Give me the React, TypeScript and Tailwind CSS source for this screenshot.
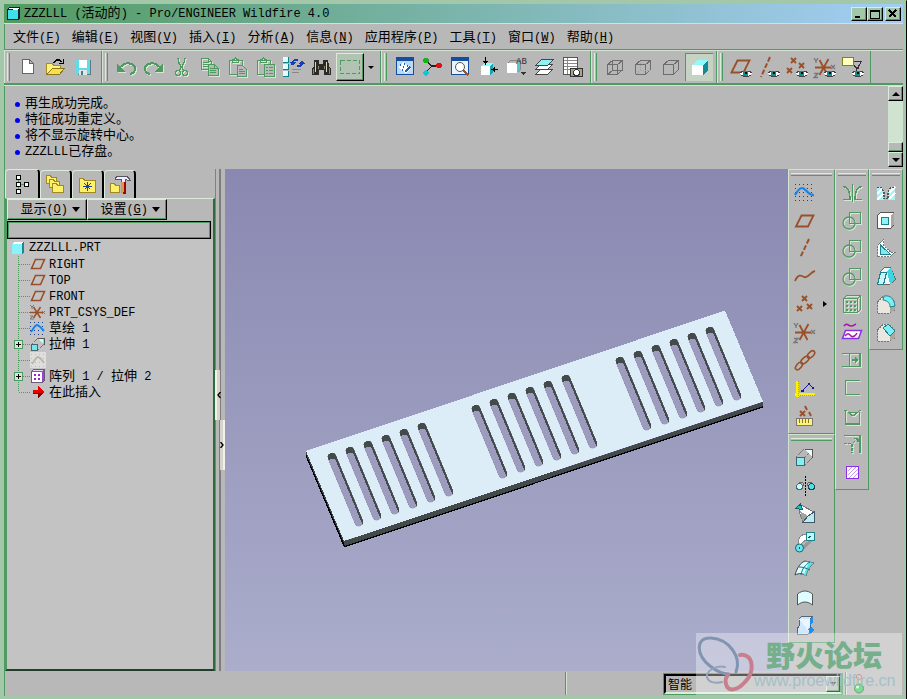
import React from "react";

type Tool = { name: string; icon: React.ReactNode; etched?: boolean; pressed?: boolean };

const green = "#4f9a61";
const brown = "#99502a";

const Icon: React.FC<{ children: React.ReactNode; etched?: boolean }> = ({ children, etched }) => (
    <svg
        viewBox="0 0 28 28"
        fill="none"
        shapeRendering="crispEdges"
        className={etched ? "h-7 w-7 drop-shadow-[1px_1px_0_#d5e6d5]" : "h-7 w-7"}
    >
        {children}
    </svg>
);

const Eye: React.FC = () => (
    <g>
        <path d="M13 20.500l3-2.500h6l3 2.500-3 2.500h-6z" fill="#fff" />
        <path d="M13 20l3-2h6l3 2M14 22l2 1h6l2-1" stroke="#444" />
        <rect x="16" y="18" width="5" height="5" fill="#0a8f8f" />
        <rect x="18" y="19" width="2" height="2" fill="#000" />
    </g>
);

const Csys: React.FC = () => (
    <g>
        <path d="M4 14.500h16M8.500 7l8 15M17.500 6l-9 16" stroke={brown} strokeWidth="1.800" shapeRendering="auto" />
        <path d="M3 5l2 3 2-3M5 8v2M3 20.500h4l-4 4h4M20 12l4 4M24 12l-4 4" stroke="#777" strokeWidth="1.300" shapeRendering="auto" />
    </g>
);

const Crosses: React.FC = () => (
    <path
        d="M11 6l5 5M16 6l-5 5M6 16l5 5M11 16l-5 5M16 14l5 5M21 14l-5 5"
        stroke={brown}
        strokeWidth="1.900"
        shapeRendering="auto"
    />
);

const Sketch: React.FC = () => (
    <g>
        {[6, 10, 14, 18, 22].map((y) => (
            <path key={y} d={`M4 ${y}.5h19`} stroke="#1b3f8f" strokeDasharray="1 3" />
        ))}
        <path d="M4 17c2-3 4-7 7-7 4 0 6 8 12 7" stroke="#1684f0" strokeWidth="2.200" shapeRendering="auto" />
    </g>
);

const Box: React.FC<{ variant: "wire" | "hidden" | "solid" }> = ({ variant }) => (
    <g stroke="#6d6d6d" strokeWidth="1.200">
        <path d="M6.500 11.500h10v10h-10zM6.500 11.500l5-4h10v9l-5 5M16.500 11.500l5-4" />
        {variant === "wire" && <path d="M11.500 7.500v10h10M11.500 17.500l-5 4" />}
        {variant === "hidden" && <path d="M11.500 7.500v10h10M11.500 17.500l-5 4" stroke="#a2a2a2" strokeDasharray="1 1" />}
    </g>
);

const CircleSquare: React.FC = () => (
    <g stroke={green} strokeWidth="1.300">
        <path d="M11.500 6.500h11v11h-11z" />
        <circle cx="11" cy="17" r="6" shapeRendering="auto" />
    </g>
);

const Block: React.FC<{ children: React.ReactNode }> = ({ children }) => (
    <g>
        <path d="M5.500 12l6-6h5l6 6v8l-5 3h-12z" fill="#e9e7df" stroke="#777" strokeDasharray="2 1" />
        <path d="M17.500 15l5-3v8l-5 3z" fill="#a9a79f" />
        {children}
    </g>
);

const fileTools: Tool[] = [
    { name: "新建", icon: <path d="M8.500 6.500h7l4 4v10h-11zM15.500 6.500v4h4" fill="#fff" stroke="#666" /> },
    {
        name: "打开",
        icon: (
            <g>
                <path d="M4.500 21.500v-11h6l1 2h7v3" fill="#fff27a" stroke="#a58d20" />
                <path d="M4.500 21.500l6-6h12l-5 6z" fill="#f8e04a" stroke="#8c7718" />
                <path d="M12 10c1-4 6-4 8-1M21.500 6v5M21 10.500h-4" stroke="#000" strokeWidth="1.400" />
            </g>
        ),
    },
    {
        name: "保存",
        icon: (
            <g>
                <path d="M6 7h14v15H8l-2-2z" fill="#62dbe8" />
                <path d="M20.500 7v14.500H8" stroke="#5c7c85" />
                <path d="M9 7h8v8H9z" fill="#fff" />
                <path d="M9 17h8v5H9z" fill="#e5e5e5" />
                <path d="M11 18h2v4h-2z" fill="#3b7f91" />
            </g>
        ),
    },
];

const editTools: Tool[] = [
    {
        name: "撤消",
        etched: true,
        icon: (
            <g>
                <path d="M9 14c4-6 14-4 14 2 0 2-1 4-5 5" stroke={green} strokeWidth="2" />
                <path d="M5 11v8h9z" fill={green} />
            </g>
        ),
    },
    {
        name: "重做",
        etched: true,
        icon: (
            <g>
                <path d="M19 14c-4-6-14-4-14 2 0 2 1 4 5 5" stroke={green} strokeWidth="2" />
                <path d="M23 11v8h-9z" fill={green} />
            </g>
        ),
    },
    {
        name: "剪切",
        etched: true,
        icon: (
            <g stroke={green} strokeWidth="1.400">
                <path d="M10 5l1 5 5 8M17 5l-1 5-5 8" />
                <circle cx="10" cy="20" r="2.500" />
                <circle cx="17" cy="20" r="2.500" />
            </g>
        ),
    },
    {
        name: "复制",
        etched: true,
        icon: (
            <g stroke={green} strokeWidth="1.200">
                <path d="M5.500 5.500h7l3 3v8h-10zM7 9.500h6M7 11.500h6M7 13.500h6M12.500 5.500v3h3" />
                <path d="M12.500 11.500h6l4 4v7h-10z" fill="#b8b8b8" />
                <path d="M14 15.500h4M14 17.500h6M14 19.500h6M18.500 11.500v4h4" />
            </g>
        ),
    },
    {
        name: "粘贴",
        etched: true,
        icon: (
            <g stroke={green} strokeWidth="1.200">
                <path d="M5.500 7.500h13v14h-13zM8.500 9.500v-3h2l1-1.500 1 1.500h2v3z" />
                <path d="M13.500 12.500h5l4 4v7h-9z" fill="#b8b8b8" />
                <path d="M15 16.500h4M15 18.500h6M15 20.500h6" />
            </g>
        ),
    },
    {
        name: "选择性粘贴",
        etched: true,
        icon: (
            <g stroke={green} strokeWidth="1.200">
                <path d="M5.500 7.500h13v14h-13zM8.500 9.500v-3h2l1-1.500 1 1.500h2v3z" />
                <path d="M12.500 11.500h10v12h-10z" fill="#b8b8b8" />
                <path d="M14 14.500h2M17 14.500h4M14 17.500h2M17 17.500h4M14 20.500h2M17 20.500h4" />
            </g>
        ),
    },
    {
        name: "再生",
        icon: (
            <g>
                {[4, 11, 18].map((y) => (
                    <g key={y}>
                        <rect x="3" y={y} width="5" height="5" fill="#d9ffff" />
                        <path d={`M3 ${y + 5}.5h5.500v-5.500`} stroke="#127f88" strokeWidth="1.500" />
                    </g>
                ))}
                <path d="M12 12c0-4 3-6 6-5M22 8c1 3-1 6-5 5" stroke="#173eb5" strokeWidth="2" />
                <path d="M10 9h6l-3 4zM19 11h6l-3-4z" fill="#173eb5" />
                <path d="M12 16.500h9M12 19.500h7" stroke="#888" />
            </g>
        ),
    },
    {
        name: "查找",
        icon: (
            <g>
                <path d="M6 7h5v4h4V7h5l1 6 2 3v6h-7v-5h-5v5H4v-6l2-3z" fill="#2c2b26" />
                <path d="M7.500 9v10M18.500 9v10" stroke="#d8d4bd" strokeWidth="1.500" />
                <path d="M5.500 16v5M10 13v3M16 13v3M21 15v6" stroke="#8a8775" />
            </g>
        ),
    },
];

const viewTools: Tool[] = [
    {
        name: "重画",
        icon: (
            <g>
                <rect x="5.500" y="4.500" width="17" height="17" fill="#b7dcfb" stroke="#164d9e" />
                <rect x="5" y="4" width="18" height="4" fill="#164d9e" />
                <path d="M7 14l5-5 8 6-5 5z" fill="#fff" />
                <path d="M9 12h1M12 14h1M13 11h1M16 13h1M11 17h1M14 19l5-5" stroke="#1f5fc0" strokeWidth="1.500" />
            </g>
        ),
    },
    {
        name: "旋转中心",
        icon: (
            <g>
                <path d="M7 8l6 5M13 13h8M13 13l-6 6" stroke="#222" strokeWidth="1.300" />
                <circle cx="7" cy="7.500" r="2.700" fill="#13b319" />
                <circle cx="20" cy="12.500" r="2.700" fill="#d81313" />
                <circle cx="7" cy="20" r="2.700" fill="#12c6d4" />
            </g>
        ),
    },
    {
        name: "重新调整",
        icon: (
            <g>
                <rect x="4.500" y="4.500" width="17" height="17" fill="#e9f3fb" stroke="#164d9e" />
                <rect x="4" y="4" width="18" height="4" fill="#164d9e" />
                <circle cx="13" cy="14" r="4.500" fill="#fff" stroke="#555" shapeRendering="auto" />
                <path d="M16.500 17.500l5 5" stroke="#8c5a3b" strokeWidth="2.400" />
            </g>
        ),
    },
    {
        name: "重定向",
        icon: (
            <g>
                <path d="M6 13h9v9H6z" fill="#fff" />
                <path d="M6 13l3-3h9l-3 3z" fill="#8ff" />
                <path d="M15 13l3-3v9l-3 3z" fill="#1aa3b0" />
                <path d="M10.500 4v6M23 16.500h-5" stroke="#000" />
                <path d="M8 8h5l-2.500 4zM20 14v5l-4-2.500z" fill="#000" />
            </g>
        ),
    },
    {
        name: "视图列表",
        icon: (
            <g>
                <path d="M4 10h10v10H4z" fill="#fff" />
                <path d="M4.500 10.500l3-3h10v9l-3 3" stroke="#888" />
                <path d="M14 10l3-3v9l-3 3z" fill="#58c7d2" />
                <text x="13" y="11" fontSize="9" fill="#333" fontFamily="Liberation Mono, monospace">AB</text>
                <path d="M18 19h5l-2.500 3z" fill="#333" />
            </g>
        ),
    },
    {
        name: "层",
        icon: (
            <g stroke="#444" fill="#fff">
                <path d="M4.500 21.500l5-5h12l-5 5z" />
                <path d="M4.500 16.500l5-5h12l-5 5z" />
                <path d="M4.500 12.500l6-6h12l-6 6z" fill="#8df1f5" />
            </g>
        ),
    },
    {
        name: "视图管理器",
        icon: (
            <g>
                <path d="M4.500 4.500h14v17h-14z" fill="#fff" stroke="#555" />
                <path d="M5 7.500h13M5 10.500h13M5 13.500h13M5 16.500h13M8.500 5v16" stroke="#888" />
                <rect x="11.500" y="15.500" width="12" height="8" fill="#aaa28b" stroke="#333" />
                <circle cx="17.500" cy="19.500" r="3" fill="#fff" stroke="#333" />
            </g>
        ),
    },
];

const shadeTools: Tool[] = [
    { name: "线框", icon: <Box variant="wire" /> },
    { name: "隐藏线", icon: <Box variant="hidden" /> },
    { name: "无隐藏线", icon: <Box variant="solid" /> },
    {
        name: "着色",
        pressed: true,
        icon: (
            <g>
                <path d="M7 12h11v10H7z" fill="#fff" />
                <path d="M7 12l5-5h11l-5 5z" fill="#8efcff" />
                <path d="M18 12l5-5v10l-5 5z" fill="#168b98" />
            </g>
        ),
    },
];

const datumDisplayTools: Tool[] = [
    {
        name: "平面显示",
        icon: (
            <g>
                <path d="M4.500 19.500l6-12h12l-6 12z" stroke={brown} strokeWidth="1.800" shapeRendering="auto" />
                <Eye />
            </g>
        ),
    },
    {
        name: "轴显示",
        icon: (
            <g>
                <path d="M15 4L6 24" stroke={brown} strokeWidth="2" strokeDasharray="5 2" shapeRendering="auto" />
                <Eye />
            </g>
        ),
    },
    {
        name: "点显示",
        icon: (
            <g>
                <path
                    d="M8 5l5 5M13 5l-5 5M4 15l5 5M9 15l-5 5M16 10l5 5M21 10l-5 5"
                    stroke={brown}
                    strokeWidth="1.900"
                    shapeRendering="auto"
                />
                <Eye />
            </g>
        ),
    },
    {
        name: "坐标系显示",
        icon: (
            <g>
                <Csys />
                <Eye />
            </g>
        ),
    },
    {
        name: "注释显示",
        icon: (
            <g>
                <rect x="3.500" y="4.500" width="11" height="8" fill="#ffffc0" stroke="#857f20" strokeWidth="1.500" />
                <path d="M15 8.500h7l-3 7M22 9l-5 9M15 12l3 4" stroke="#333" />
                <Eye />
            </g>
        ),
    },
];

const datumTools: Tool[] = [
    { name: "草绘", icon: <Sketch /> },
    {
        name: "基准平面",
        icon: <path d="M5 20.500l5.500-11h12l-5.500 11z" stroke={brown} strokeWidth="1.800" shapeRendering="auto" />,
    },
    {
        name: "基准轴",
        icon: <path d="M18 5L9 24" stroke={brown} strokeWidth="2" strokeDasharray="5 2" shapeRendering="auto" />,
    },
    {
        name: "基准曲线",
        icon: <path d="M4 19c3-7 6-6 9-4 4 2 6-5 11-6" stroke={brown} strokeWidth="1.800" shapeRendering="auto" />,
    },
    { name: "基准点", icon: <Crosses /> },
    { name: "坐标系", icon: <Csys /> },
    {
        name: "基准参照",
        icon: (
            <g stroke={brown} strokeWidth="1.600" shapeRendering="auto">
                <ellipse cx="8" cy="20" rx="4.500" ry="2.500" transform="rotate(-50 8 20)" />
                <ellipse cx="14" cy="14" rx="5" ry="2.500" transform="rotate(-42 14 14)" />
                <ellipse cx="20" cy="8.500" rx="4.500" ry="2.500" transform="rotate(-45 20 8.500)" />
            </g>
        ),
    },
    {
        name: "分析特征",
        icon: (
            <g>
                <path d="M6.500 7v16M4 20.500h20" stroke="#fff200" strokeWidth="3" />
                <path d="M7 7v14h17" stroke="#b59e16" strokeDasharray="1 1" />
                <path d="M11 17l7-7 4 4" stroke="#1414a8" strokeWidth="1.300" />
                <path d="M10 16h3v2h-3zM17 9h2v2h-2zM21 13h2v2h-2z" fill="#1414a8" />
            </g>
        ),
    },
    {
        name: "参照测量",
        icon: (
            <g>
                <path
                    d="M14 4l2 4M9 9l5 5M14 9l-5 5M18 10l2 4"
                    stroke={brown}
                    strokeWidth="1.900"
                    shapeRendering="auto"
                />
                <rect x="5.500" y="16.500" width="16" height="7" fill="#fff27a" stroke="#777" />
                <path d="M8.500 17v4M11.500 17v4M14.500 17v4M17.500 17v4" stroke="#8a7718" />
            </g>
        ),
    },
];

const shapeTools: Tool[] = [
    {
        name: "拉伸",
        icon: (
            <g>
                <path d="M5 14l8-8M14 22l8-8M14 14l8-8" stroke="#777" strokeDasharray="2 1" />
                <path d="M13.500 6.500h8v8" stroke="#555" />
                <path d="M14 7h7v7z" fill="#f2ffff" />
                <rect x="5.500" y="14.500" width="8" height="8" fill="#86eff5" stroke="#48636b" />
            </g>
        ),
    },
    {
        name: "旋转",
        icon: (
            <g>
                <path d="M14.500 5v20" stroke="#000" strokeDasharray="2 1" />
                <path d="M8 12c3-2 5 0 5 3M21 12c-3-2-5 0-5 3" stroke="#666" />
                <circle cx="8.500" cy="15.500" r="3" fill="#c4fbff" stroke="#566" />
                <circle cx="20.500" cy="15.500" r="3" fill="#4de0e8" stroke="#244" />
            </g>
        ),
    },
    {
        name: "混合扫描",
        icon: (
            <g>
                <path d="M10 6l13 7v10H12L8 12z" fill="#fff" stroke="#777" />
                <path d="M9 12l3 11 5-6z" fill="#a2a2a2" />
                <path d="M12 23l5-6 6-4v10z" fill="#b7eef0" stroke="#456" />
                <path d="M4.500 9.500l5-4.500 2 5.500z" fill="#19c3cd" stroke="#165f66" />
            </g>
        ),
    },
    {
        name: "扫描",
        icon: (
            <g>
                <path d="M7 18c0-8 3-11 9-11v6c-4 1-6 3-6 7z" fill="#fff" stroke="#888" />
                <path d="M12 20c0-4 4-6 9-6l-8 8z" fill="#999" />
                <rect x="15.500" y="5.500" width="8" height="8" fill="#b9fbff" stroke="#20838b" />
                <circle cx="8.500" cy="21" r="4" fill="#66e8f0" stroke="#176a72" shapeRendering="auto" />
                <path d="M8 20v2M17 11l3-2" stroke="#444" />
            </g>
        ),
    },
    {
        name: "边界混合",
        icon: (
            <g shapeRendering="auto">
                <path d="M4 20c2-7 5-12 10-14l9 2c-5 4-7 8-8 13-3-3-7-3-11-1z" fill="#d9fdff" stroke="#444" />
                <path d="M14 6l9 2c-5 4-7 8-8 13l-2-1c1-5 3-8 5-12z" fill="#5fdde5" />
                <path d="M10 20c1-6 4-10 9-13M8 12c4 0 7 1 11 3" stroke="#0e7680" />
            </g>
        ),
    },
    {
        name: "填充",
        icon: <path d="M6.500 22v-11c5-4 10-4 15 0v11c-5-4-10-4-15 0z" fill="#dffcff" stroke="#555" shapeRendering="auto" />,
    },
    {
        name: "样式",
        icon: (
            <g>
                <path d="M8 8l3-3h11l-3 4v6l2 6-4 2H6V18l3-4z" fill="#cfe8ff" stroke="#567" />
                <path d="M8 8h11v6l-2 3 2 5" fill="#eaf6ff" />
                <path d="M19 8l3-3v6l-3 4zM17 18l4-2 2 3-4 4z" fill="#1f8ef0" />
            </g>
        ),
    },
];

const editFeatureTools: Tool[] = [
    { name: "镜像", etched: true, icon: <path d="M14.500 6v18M5 8.500c5 0 7 4 7 13H5M24 8.500c-5 0-7 4-7 13h7" stroke={green} strokeWidth="1.300" /> },
    { name: "合并", etched: true, icon: <CircleSquare /> },
    { name: "修剪", etched: true, icon: <CircleSquare /> },
    { name: "相交", etched: true, icon: <CircleSquare /> },
    {
        name: "阵列",
        etched: true,
        icon: (
            <g stroke={green} strokeWidth="1.300">
                <path d="M5.500 8.500l3-3h14v14l-3 3h-14zM5.500 8.500h14v14M19.500 8.500l3-3" />
                <path d="M8 11.500h10M8 15.500h10M8 19.500h10" strokeWidth="2" strokeDasharray="2 2" />
            </g>
        ),
    },
    {
        name: "投影",
        icon: (
            <g shapeRendering="auto">
                <path d="M6 8c3-4 4 0 7 0s3-1 5-2" stroke="#a516a5" strokeWidth="1.600" />
                <path d="M4.500 20.500l3-8h16l-3 8z" fill="#fff" stroke="#8b2fe6" strokeWidth="1.500" />
                <path d="M7 18c3-4 4-2 6 0s5-1 6-3" stroke="#a516a5" strokeWidth="1.600" />
            </g>
        ),
    },
    {
        name: "延伸",
        etched: true,
        icon: (
            <g stroke={green} strokeWidth="1.300">
                <path d="M4 7.500h18v13H4M11.500 7.500v13M14 14h6" />
                <path d="M17 11l4 3-4 3z" fill={green} stroke="none" />
            </g>
        ),
    },
    { name: "偏移", etched: true, icon: <path d="M22 6.500H7.500v14H22" stroke={green} strokeWidth="1.300" /> },
    {
        name: "加厚",
        etched: true,
        icon: (
            <path
                d="M6 8.500h3M7.500 9v13h14V10M10 10.500h9M21 8.500h2M10 10l5 4 5-4 2-2"
                stroke={green}
                strokeWidth="1.300"
            />
        ),
    },
    {
        name: "实体化",
        etched: true,
        icon: (
            <g stroke={green} strokeWidth="1.300">
                <path d="M6 5.500h16v17" />
                <path d="M6 13.500h8v9M15 13l5-5M16 8.500h4v4" strokeDasharray="3 1" />
            </g>
        ),
    },
    {
        name: "剖面填充",
        icon: (
            <g>
                <rect x="8.500" y="8.500" width="12" height="12" fill="#fff" stroke="#8b2fe6" strokeWidth="1.500" />
                <path d="M10 13l4-4M10 17l8-8M11 20l9-9M15 20l5-5" stroke="#c49af0" />
            </g>
        ),
    },
];

const engineeringTools: Tool[] = [
    {
        name: "孔",
        icon: (
            <g>
                <path d="M5 9h4l3 4v9H5zM23 9h-4l-3 4v9h7z" fill="#a6f4f8" />
                <path d="M5 22l6-6M5 16l5-5M17 21l6-6M17 15l6-6" stroke="#fff" strokeWidth="1.500" />
                <path d="M5 9.500h4l3 4v7h4v-7l3-4h4" stroke="#555" strokeWidth="1.200" strokeDasharray="2 1" />
            </g>
        ),
    },
    {
        name: "壳",
        icon: (
            <g>
                <path d="M5.500 9.500l3-3h13v13l-3 3h-13z" fill="#fff" stroke="#555" />
                <path d="M18.500 22v-12l3-3v12z" fill="#aaa79e" />
                <rect x="9.500" y="11.500" width="7" height="7" fill="#8ef4fa" stroke="#24818a" />
            </g>
        ),
    },
    {
        name: "筋",
        icon: (
            <g>
                <path d="M5.500 22.500V11.500l6-6v6l7 6.500h5l-5 4.500z" fill="#fff" stroke="#777" strokeDasharray="2 1" />
                <path d="M8.500 11v9.500h10z" fill="#80ecf2" stroke="#24818a" />
            </g>
        ),
    },
    {
        name: "拔模",
        icon: (
            <g>
                <path d="M5.500 22.500l3-13 4-4h6l5 12-6 5z" fill="#e9fdff" stroke="#666" />
                <path d="M15 9l4-4 4 12-5 5z" fill="#3bd6df" />
                <path d="M5.500 22.500l3-12h6l-3 12z" fill="#c7f7fa" stroke="#24818a" />
            </g>
        ),
    },
    {
        name: "倒圆角",
        icon: (
            <Block>
                <path d="M12 6c7-1 10 3 11 10l-5 1c0-4-2-6-7-7z" fill="#7deef3" stroke="#24818a" shapeRendering="auto" />
            </Block>
        ),
    },
    {
        name: "倒角",
        icon: (
            <Block>
                <path d="M11 10l5-4 7 7-5 5z" fill="#7deef3" stroke="#24818a" />
            </Block>
        ),
    },
];

const ToolButton: React.FC<{ tool: Tool }> = ({ tool }) => (
    <button
        type="button"
        title={tool.name}
        className={
            tool.pressed
                ? "h-7 w-7 shrink-0 bg-[#c5d3c5] shadow-[inset_1px_1px_0_#4f9a61]"
                : "h-7 w-7 shrink-0"
        }
    >
        <Icon etched={tool.etched}>{tool.icon}</Icon>
    </button>
);

const ToolGroup: React.FC<{ tools: Tool[]; children?: React.ReactNode }> = ({ tools, children }) => (
    <div className="flex border-r border-l border-r-[#4f9a61] border-l-[#d0e4d0] pt-0.5 pr-[3px] pb-0.5">
        <div className="mr-1 ml-0.5 h-7 w-[3px] border-x border-l-[#dcecdc] border-r-[#4f9a61]" />
        {tools.map((tool) => (
            <ToolButton key={tool.name} tool={tool} />
        ))}
        {children}
    </div>
);

const ToolColumn: React.FC<{ tools: Tool[]; wide?: boolean }> = ({ tools, wide }) => (
    <div className="border-t border-r border-b border-l border-[#4f9a61] border-t-[#d0e4d0] border-l-[#d0e4d0] px-0.5 pt-[3px] pb-[3px]">
        <div className="mb-0.5 h-[3px] border-y border-t-[#dcecdc] border-b-[#4f9a61]" />
        {tools.map((tool) => (
            <div key={tool.name} className={wide ? "flex w-[41px] items-center" : "flex w-7 items-center"}>
                <ToolButton tool={tool} />
                {tool.name === "基准点" && (
                    <span className="ml-1 border-y-[3px] border-l-4 border-y-transparent border-l-black" />
                )}
            </div>
        ))}
    </div>
);

const menus = [
    ["文件", "F"],
    ["编辑", "E"],
    ["视图", "V"],
    ["插入", "I"],
    ["分析", "A"],
    ["信息", "N"],
    ["应用程序", "P"],
    ["工具", "T"],
    ["窗口", "W"],
    ["帮助", "H"],
];

const messages = ["再生成功完成。", "特征成功重定义。", "将不显示旋转中心。"];

const Label: React.FC<{ text: string; accel: string }> = ({ text, accel }) => (
    <span className="text-[13px] whitespace-nowrap">
        {text}
        <span className="text-xs">
            (<span className="underline">{accel}</span>)
        </span>
    </span>
);

const planeIcon = <path d="M1.500 12.500l4-9h9l-4 9z" stroke={brown} strokeWidth="1.600" shapeRendering="auto" />;

const treeRows: { text: string; icon: React.ReactNode; expandable?: boolean }[] = [
    { text: "RIGHT", icon: planeIcon },
    { text: "TOP", icon: planeIcon },
    { text: "FRONT", icon: planeIcon },
    {
        text: "PRT_CSYS_DEF",
        icon: (
            <g shapeRendering="auto">
                <path d="M0 8.500h13M3.500 3l7 11M10.500 3l-7 11" stroke={brown} strokeWidth="1.500" />
                <path d="M0 1l2 2 2-2M2 3v2M0 12h3l-3 3h4M12 7l3 3M15 7l-3 3" stroke="#777" />
            </g>
        ),
    },
    {
        text: "草绘 1",
        icon: (
            <g>
                <path d="M0 2.500h15M0 6.500h15M0 10.500h15M0 14.500h15" stroke="#1b3f8f" strokeDasharray="1 3" />
                <path d="M1 12c3-4 4-7 6-7s4 3 7 6" stroke="#1684f0" strokeWidth="2" shapeRendering="auto" />
            </g>
        ),
    },
    {
        text: "拉伸 1",
        expandable: true,
        icon: (
            <g>
                <path d="M2 8l6-6M8 14l6-6" stroke="#777" strokeDasharray="2 1" />
                <path d="M8 2.500h6v6" stroke="#555" />
                <path d="M8 3h5v5z" fill="#c9fbff" />
                <rect x="1.500" y="8.500" width="6" height="6" fill="#72e5ee" stroke="#48636b" />
            </g>
        ),
    },
    {
        text: "",
        icon: (
            <g>
                <rect width="16" height="16" fill="#dedede" />
                <path d="M1 2.500h14M1 6.500h14M1 10.500h14M1 14.500h14" stroke="#bdbdb5" strokeDasharray="1 3" />
                <path d="M2 12c3-4 4-7 6-7s4 3 6 6" stroke="#bcb8a4" strokeWidth="1.800" shapeRendering="auto" />
            </g>
        ),
    },
    {
        text: "阵列 1 / 拉伸 2",
        expandable: true,
        icon: (
            <g>
                <path d="M1.500 3.500l2-2h11v11l-2 2h-11z" fill="#9546c9" stroke="#6a5a7a" />
                <path d="M2 3l1-1h10l-1 1z" fill="#e6d4f2" />
                <rect x="2" y="4" width="10" height="10" fill="#fff" />
                <path d="M4 6.500h6M4 10.500h6" stroke="#9d1fd6" strokeWidth="2" strokeDasharray="2 2" />
            </g>
        ),
    },
    {
        text: "在此插入",
        icon: (
            <g>
                <path d="M3 6h5V2l6 6-6 6v-4H3z" fill="#e60000" />
                <path d="M3 9h11l-6 5v-4H3z" fill="#7d0000" />
            </g>
        ),
    },
];

const TreeText: React.FC<{ text: string }> = ({ text }) => (
    <span className="ml-[3px] whitespace-pre">
        {text.split(/([\u4e00-\u9fff]+)/).map((part, i) => (
            <span key={i} className={i % 2 ? "text-[13px]" : "text-xs"}>
                {part}
            </span>
        ))}
    </span>
);

const ModelTree: React.FC = () => (
    <ul className="flex-1 bg-[#c3c3c3] pt-px pl-1">
        <li className="flex h-4 items-center text-xs">
            <svg viewBox="0 0 14 14" className="h-3.5 w-3.5" shapeRendering="crispEdges">
                <path d="M1 3l2-2h10v10l-2 2H1z" fill="#168b98" />
                <path d="M1 3l2-2h9l-1 2z" fill="#fff" />
                <rect x="1" y="3" width="10" height="10" fill="#86f4fa" />
            </svg>
            <span className="ml-1">ZZZLLL.PRT</span>
        </li>
        {treeRows.map((row, i) => (
            <li key={i} className="flex h-4 items-center">
                <svg viewBox="0 0 19 16" className="h-4 w-[19px] shrink-0" fill="none" shapeRendering="crispEdges">
                    <path d={i === treeRows.length - 1 ? "M7.500 0v8" : "M7.500 0v16"} stroke={green} strokeDasharray="1 1" />
                    <path d="M8 8.500h11" stroke={green} strokeDasharray="1 1" />
                    {row.expandable && (
                        <g>
                            <rect x="3.500" y="4.500" width="8" height="8" fill="#d7e6d7" stroke={green} />
                            <path d="M5 8.500h5M7.500 6v5" stroke="#000" />
                        </g>
                    )}
                </svg>
                <svg viewBox="0 0 16 16" className="h-4 w-4 shrink-0" fill="none" shapeRendering="crispEdges">
                    {row.icon}
                </svg>
                <TreeText text={row.text} />
            </li>
        ))}
    </ul>
);

const Folder: React.FC<{ x: number; y: number; w: number; h: number }> = ({ x, y, w, h }) => (
    <path d={`M${x} ${y + h}v-${h}h4l1 2h${w - 5}v${h - 2}z`} fill="#fff06a" stroke="#a08a20" />
);

const tabs: { name: string; icon: React.ReactNode }[] = [
    {
        name: "模型树",
        icon: (
            <g fill="#fff" stroke="#000">
                <path d="M7.500 3v18M8 11.500h8" stroke={green} />
                <path d="M5.500 2.500h4v4h-4zM5.500 9.500h4v4h-4zM5.500 16.500h4v4h-4zM13.500 9.500h4v4h-4z" />
            </g>
        ),
    },
    {
        name: "文件夹浏览器",
        icon: (
            <g>
                <Folder x={1.5} y={1.5} w={10} h={8} />
                <Folder x={4.5} y={5.5} w={10} h={8} />
                <Folder x={7.5} y={9.5} w={11} h={9} />
            </g>
        ),
    },
    {
        name: "收藏夹",
        icon: (
            <g>
                <Folder x={2.5} y={4.5} w={16} h={14} />
                <path d="M10.500 8v9M6 12.500h9M7.500 9.500l6 6M13.500 9.500l-6 6" stroke="#173eb5" />
            </g>
        ),
    },
    {
        name: "连接",
        icon: (
            <g>
                <Folder x={1.5} y={9.5} w={9} h={9} />
                <path d="M6 4l3-2h9l3 4h-3l-2-1v3h-4V5H6z" fill="#eef" stroke="#556" />
                <path d="M12 8h4v11h-4z" fill="#d79a4b" />
                <path d="M16 8v11h-2" stroke="#a00" strokeWidth="1.500" />
            </g>
        ),
    },
];

const LeftPane: React.FC = () => (
    <aside className="flex w-[210px] shrink-0 flex-col">
        <div className="flex items-end">
            {tabs.map((tab, i) => (
                <button
                    key={tab.name}
                    type="button"
                    title={tab.name}
                    className={
                        i === 0
                            ? "flex h-[29px] w-[35px] items-center justify-center rounded-t-sm border-t border-r-2 border-l border-t-[#dcecdc] border-r-black border-l-[#dcecdc]"
                            : "flex h-7 w-8 items-center justify-center rounded-t-sm border-t border-r-2 border-l border-t-[#dcecdc] border-r-black border-l-[#dcecdc]"
                    }
                >
                    <svg viewBox="0 0 22 22" className="h-[22px] w-[22px] shrink-0" fill="none" shapeRendering="crispEdges">
                        {tab.icon}
                    </svg>
                </button>
            ))}
        </div>
        <div className="flex flex-1 flex-col border-t border-r-2 border-b-2 border-l-2 border-t-[#dcecdc] border-r-[#2b6b3c] border-b-[#1f3f28] border-l-[#4f9a61]">
            <div className="flex">
                {[["显示", "O"], ["设置", "G"]].map(([text, accel]) => (
                    <button
                        key={text}
                        type="button"
                        className="flex h-[21px] w-20 items-center justify-end gap-1 border-t border-r border-b border-l border-t-[#dcecdc] border-r-black border-b-black border-l-[#dcecdc] pr-1.5 shadow-[inset_-1px_-1px_0_#4f9a61]"
                    >
                        <Label text={text} accel={accel} />
                        <span className="border-x-4 border-t-[5px] border-x-transparent border-t-black" />
                    </button>
                ))}
            </div>
            <input
                aria-label="搜索"
                className="mt-px mr-0.5 h-[18px] border border-black bg-[#b9b9b9] px-1 text-xs shadow-[inset_1px_1px_0_#4f9a61,inset_-1px_-1px_0_#4f9a61] outline-none"
            />
            <ModelTree />
        </div>
    </aside>
);

const Splitter: React.FC = () => (
    <div className="flex w-2.5 shrink-0 flex-col bg-[linear-gradient(90deg,#808080_0_1px,#b8b8b8_1px_4px,#7d7d7d_4px_6px,#b8b8b8_6px)]">
        <div className="flex flex-1 flex-col items-start justify-center">
            <button type="button" title="收起" className="flex h-[50px] w-[5px] items-center justify-center border-l-2 border-[#f4f2e8] bg-[#d5d3cb]">
                <svg viewBox="0 0 4 6" className="h-1.5 w-1 shrink-0" fill="none">
                    <path d="M3.500 0L1 3l2.500 3" stroke="#000" strokeWidth="1.400" />
                </svg>
            </button>
            <button type="button" title="展开" className="ml-[5px] flex h-[50px] w-[5px] items-center justify-center border-r-2 border-[#f4f2e8] bg-[#d5d3cb]">
                <svg viewBox="0 0 4 6" className="h-1.5 w-1 shrink-0" fill="none">
                    <path d="M.5 0L3 3 .5 6" stroke="#000" strokeWidth="1.400" />
                </svg>
            </button>
        </div>
    </div>
);

const slotPath = "M4.150-1.730L31.150 63.270A4.500 4.500 0 0 1 22.850 66.730L-4.150 1.730A4.500 4.500 0 0 1 4.150-1.730Z";

const Viewport: React.FC = () => (
    <main className="min-w-0 flex-1 bg-linear-to-b from-[#8a88b1] to-[#abadcb]">
        <svg viewBox="225 169 563 502" className="h-full w-full" shapeRendering="crispEdges">
            <defs>
                <clipPath id="slot">
                    <path d={slotPath} />
                </clipPath>
            </defs>
            <path d="M306 451L344 541 763 402V407.500L344 547.500 306 457z" fill="#000" />
            <path d="M306 451L344 541 763 402V406L345 546 306 454z" fill="#434a4c" />
            <path d="M306 451L725 310.500 763 401.500 344 541z" fill="#dcedf8" />
            {[0, 1, 2].map((group) =>
                [0, 1, 2, 3, 4, 5].map((n) => (
                    <g
                        key={`${group}-${n}`}
                        transform={`translate(${332 + group * 144 + n * 18} ${457 - group * 48 - n * 6})`}
                        clipPath="url(#slot)"
                    >
                        <path d={slotPath} fill="#434a4c" />
                        <path d={slotPath} transform="translate(0 6)" fill="#9d9cbf" />
                    </g>
                )),
            )}
        </svg>
    </main>
);

const raised = "border border-t-[#dcecdc] border-l-[#dcecdc] border-r-black border-b-black shadow-[inset_-1px_-1px_0_#4f9a61]";

const Watermark: React.FC = () => (
    <div className="pointer-events-none absolute right-1 bottom-1 flex h-[62px] w-[206px] items-center bg-white/35">
        <svg viewBox="0 0 60 62" className="h-[62px] w-[60px] shrink-0" fill="none" strokeLinecap="round">
            <path d="M40 39C46 24 33 6 15 5-1 4 0 22 14 33c5 4 12 8 19 8" stroke="#8195b0" strokeWidth="3" />
            <path d="M29 34c-9-2-19 4-18 10 1 5 8 7 15 5" stroke="#93a3b9" strokeWidth="2" />
            <path d="M44 22c14-2 15 17 5 27-8 9-17 10-19 2-1-3 0-7 2-9" stroke="#c77f8e" strokeWidth="4" />
        </svg>
        <div className="-ml-0.5 flex flex-col whitespace-nowrap">
            <span className="ml-3 font-['Noto_Sans_CJK_SC',sans-serif] text-[29px] leading-[34px] font-black text-[#75af8b]">野火论坛</span>
            <span className="font-['Liberation_Sans',sans-serif] text-base leading-5 text-[#a3c0c9]">www.proewildfire.cn</span>
        </div>
    </div>
);

export default function App() {
    return (
        <div className="relative flex min-h-screen w-full flex-col border border-t-[#a3c7a9] border-l-[#a3c7a9] border-r-black border-b-black bg-[#b8b8b8] font-['Liberation_Mono','Noto_Sans_CJK_SC',monospace] text-black">
            <div className="flex flex-1 flex-col border-[3px] border-[#a3c7a9] shadow-[inset_1px_0_0_#4f9a61]">
                <header className="flex h-5 items-center border-b border-[#d0e4d0] bg-linear-to-r from-[#529a60] to-[#a3cdf5] pr-0.5 pl-[3px]">
                    <svg viewBox="0 0 13 13" className="h-[13px] w-[13px]" shapeRendering="crispEdges">
                        <path d="M0 2l2-2h11v11l-2 2H0z" fill="#123" />
                        <path d="M1 3h10v9H1z" fill="#3fe0ea" />
                        <path d="M1 2l1-1h10l-1 2z" fill="#fff" />
                    </svg>
                    <h1 className="ml-1 flex-1 text-xs whitespace-pre">
                        ZZZLLL (<span className="text-[13px]">活动的</span>) - Pro/ENGINEER Wildfire 4.0
                    </h1>
                    {["M3 9h5", "M2.500 2.500h9v8h-9zM3 3.500h8", "M3 2l7 7M10 2l-7 7"].map((d, i) => (
                        <button
                            key={d}
                            type="button"
                            title={["最小化", "最大化", "关闭"][i]}
                            className={`flex h-3.5 w-4 items-center justify-center bg-[#a3c7a9] ${raised} ${i === 2 ? "ml-0.5" : ""}`}
                        >
                            <svg viewBox="0 0 14 12" className="h-3 w-3.5 shrink-0" fill="none" shapeRendering="crispEdges">
                                <path d={d} stroke="#000" strokeWidth={i === 1 ? 1 : 2} />
                            </svg>
                        </button>
                    ))}
                </header>
                <nav className="flex h-[26px] items-center gap-[11px] border-b border-[#4f9a61] pl-[9px]">
                    {menus.map(([text, accel]) => (
                        <button key={text} type="button">
                            <Label text={text} accel={accel} />
                        </button>
                    ))}
                </nav>
                <div className="flex border-t border-b-2 border-t-[#d0e4d0] border-b-[#4f9a61]">
                    <ToolGroup tools={fileTools} />
                    <ToolGroup tools={editTools}>
                        <button type="button" title="选取" className={`flex h-7 w-7 items-center justify-center bg-[#b2c3b3] ${raised}`}>
                            <svg viewBox="0 0 28 28" className="h-7 w-7 shrink-0" fill="none" shapeRendering="crispEdges">
                                <rect x="4.500" y="7.500" width="19" height="13" stroke={green} strokeDasharray="4 2" />
                            </svg>
                        </button>
                        <button type="button" title="选取选项" className="flex w-[13px] items-center justify-center">
                            <span className="border-x-[3px] border-t-[3px] border-x-transparent border-t-black" />
                        </button>
                    </ToolGroup>
                    <ToolGroup tools={viewTools} />
                    <ToolGroup tools={shadeTools} />
                    <ToolGroup tools={datumDisplayTools} />
                </div>
                <section className="flex h-[84px] border-t border-[#d0e4d0] pb-0.5">
                    <ul className="flex-1 pt-2.5 pl-[11px] text-[13px] leading-4">
                        {messages.map((message) => (
                            <li key={message} className="flex items-center gap-[5px]">
                                <span className="h-[5px] w-[5px] rounded-full bg-[#0000f0]" />
                                {message}
                            </li>
                        ))}
                        <li className="flex items-center gap-[5px]">
                            <span className="h-[5px] w-[5px] rounded-full bg-[#0000f0]" />
                            <span>
                                <span className="text-xs">ZZZLLL</span>已存盘。
                            </span>
                        </li>
                    </ul>
                    <div className="flex w-[15px] flex-col bg-[#d0e2d0]">
                        <button type="button" title="向上" className={`flex h-[15px] items-center justify-center bg-[#b8b8b8] ${raised}`}>
                            <span className="border-x-4 border-b-4 border-x-transparent border-b-black" />
                        </button>
                        <div className="flex-1" />
                        <div className={`h-2.5 bg-[#b8b8b8] ${raised}`} />
                        <button type="button" title="向下" className={`flex h-[15px] items-center justify-center bg-[#b8b8b8] ${raised}`}>
                            <span className="border-x-4 border-t-4 border-x-transparent border-t-black" />
                        </button>
                    </div>
                </section>
                <div className="flex flex-1 pl-px">
                    <LeftPane />
                    <Splitter />
                    <Viewport />
                    <div className="flex shrink-0 items-start">
                        <div>
                            <ToolColumn tools={datumTools} wide />
                            <ToolColumn tools={shapeTools} wide />
                        </div>
                        <ToolColumn tools={editFeatureTools} />
                        <ToolColumn tools={engineeringTools} />
                    </div>
                </div>
                <footer className="flex h-[25px] items-center justify-end">
                    <div className="mr-[97px] h-[23px] w-0.5 border-x border-l-[#4f9a61] border-r-[#d0e4d0]" />
                    <div className="relative">
                        <select
                            aria-label="过滤器"
                            className="block h-5 w-[178px] appearance-none border-2 border-t-black border-r-[#4f9a61] border-b-[#dcecdc] border-l-black bg-[#b8b8b8] pl-0.5 font-['Noto_Sans_CJK_SC',sans-serif] text-xs leading-4 outline-1 outline-[#4f9a61]"
                        >
                            <option>智能</option>
                        </select>
                        <span className={`pointer-events-none absolute top-0.5 right-0.5 flex h-4 w-3.5 items-center justify-center bg-[#b8b8b8] ${raised}`}>
                            <span className="border-x-[3px] border-t-4 border-x-transparent border-t-black" />
                        </span>
                    </div>
                    <div className="ml-[3px] h-[23px] w-0.5 border-x border-l-[#4f9a61] border-r-[#d0e4d0]" />
                    <svg viewBox="0 0 12 20" className="mr-[38px] ml-1.5 h-5 w-3">
                        <circle cx="6" cy="3" r="2.500" fill="#e9b5b5" stroke="#d44" />
                        <rect x="4" y="6" width="4" height="4" fill="#f5e93c" stroke="#aa8" />
                        <circle cx="6" cy="14.500" r="4.500" fill="#3fc45c" stroke="#187a2d" />
                        <circle cx="4.500" cy="13" r="1.500" fill="#cfffd8" />
                    </svg>
                </footer>
            </div>
            <Watermark />
        </div>
    );
}
